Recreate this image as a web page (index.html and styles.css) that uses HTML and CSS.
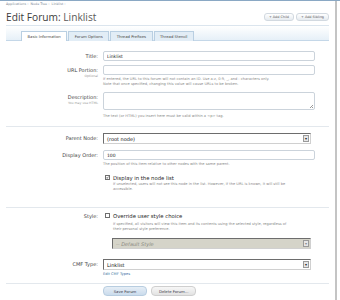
FILE: index.html
```html
<!DOCTYPE html>
<html lang="en">
<head>
  <meta charset="UTF-8" />
  <title>Edit Forum: Linklist</title>
  <link rel="stylesheet" href="styles.css">
</head>
<body>
  <div class="frame">
    <div class="page">
      <div class="crumbs">Applications &rsaquo; &nbsp;Node Tree &rsaquo; &nbsp;Linklist &rsaquo;</div>

      <div class="title-bar">
        <h1>Edit Forum: <span>Linklist</span></h1>
        <div class="top-buttons">
          <button class="mini-btn">+ Add Child</button>
          <button class="mini-btn">+ Add Sibling</button>
        </div>
      </div>

      <div class="tabs-band">
        <div class="tab active">Basic Information</div>
        <div class="tab">Forum Options</div>
        <div class="tab">Thread Prefixes</div>
        <div class="tab">Thread Stencil</div>
      </div>

      <form class="form">
        <div class="row row-title">
          <div class="label">Title:</div>
          <div class="control">
            <input class="field" type="text" value="Linklist" />
          </div>
        </div>

        <div class="row row-url">
          <div class="label">URL Portion:<small>Optional</small></div>
          <div class="control">
            <input class="field" type="text" value="" />
            <p class="hint">If entered, the URL to this forum will not contain an ID. Use a-z, 0-9, _, and - characters only.<br>Note that once specified, changing this value will cause URLs to be broken.</p>
          </div>
        </div>

        <div class="row row-desc">
          <div class="label">Description:<small>You may use HTML</small></div>
          <div class="control">
            <div class="field area"><span class="grip"></span></div>
            <p class="hint">The text (or HTML) you insert here must be valid within a &lt;p&gt; tag.</p>
          </div>
        </div>

        <div class="sep sep-1"></div>

        <div class="row row-parent">
          <div class="label label-select">Parent Node:</div>
          <div class="control">
            <div class="select"><span>(root node)</span><span class="arrow">&#9662;</span></div>
          </div>
        </div>

        <div class="row row-order">
          <div class="label">Display Order:</div>
          <div class="control">
            <input class="field" type="text" value="100" />
            <p class="hint">The position of this item relative to other nodes with the same parent.</p>
          </div>
        </div>

        <div class="row row-check">
          <div class="label"></div>
          <div class="control">
            <div class="check"><span class="box checked"><svg viewBox="0 0 10 10"><polyline points="2,5 4,8 8,2" /></svg></span>Display in the node list</div>
            <p class="hint hint-check">If unselected, users will not see this node in the list. However, if the URL is known, it will still be<br>accessible.</p>
          </div>
        </div>

        <div class="sep sep-2"></div>

        <div class="row row-style">
          <div class="label label-check">Style:</div>
          <div class="control">
            <div class="check"><span class="box"></span>Override user style choice</div>
            <p class="hint hint-check">If specified, all visitors will view this item and its contents using the selected style, regardless of<br>their personal style preference.</p>
            <div class="select disabled"><span>-- Default Style</span><span class="arrow">&#9662;</span></div>
          </div>
        </div>

        <div class="row row-cmf">
          <div class="label label-select">CMF Type:</div>
          <div class="control">
            <div class="select"><span>Linklist</span><span class="arrow">&#9662;</span></div>
            <a class="link" href="#">Edit CMF Types</a>
          </div>
        </div>

        <div class="sep sep-3"></div>

        <div class="row row-submit">
          <div class="label"></div>
          <div class="control buttons">
            <button class="btn primary" type="button">Save Forum</button>
            <button class="btn" type="button">Delete Forum...</button>
          </div>
        </div>
      </form>
    </div>
    <div class="edge"></div>
  </div>
</body>
</html>
```

FILE: styles.css
```css
* {
  box-sizing: border-box;
  margin: 0;
  padding: 0;
}

body {
  font-family: "DejaVu Sans", Verdana, sans-serif;
  color: #333;
  background: #fff;
}

.frame {
  display: flex;
  height: 300px;
  border-top: 1px solid #8aa8c4;
}

.page {
  flex: 1;
  padding: 0 6px;
}

.edge {
  width: 2px;
  background: #c4c4c4;
  margin-right: 3px;
}

.crumbs {
  height: 7px;
  font-size: 3.3px;
  line-height: 6px;
  color: #7d8a96;
}

.title-bar {
  display: flex;
  align-items: center;
  justify-content: space-between;
  height: 18px;
  border-bottom: 1px solid #dbe5ee;
}

h1 {
  font-family: "Open Sans", sans-serif;
  font-size: 10.2px;
  font-weight: normal;
  color: #3c3c3c;
}

h1 span {
  color: #5a5a5a;
}

.top-buttons {
  display: flex;
  gap: 2px;
}

.mini-btn {
  height: 8px;
  padding: 0 4px;
  font-family: inherit;
  font-size: 3.4px;
  line-height: 6px;
  color: #555;
  border: 1px solid #d2d9e0;
  border-radius: 3px;
  background: linear-gradient(#fff, #e6ebf0);
}

.tabs-band {
  display: flex;
  height: 15px;
  padding: 5px 0 0 15px;
  background: linear-gradient(#fff, #e6f0f8);
  border-bottom: 1px solid #c4d7e8;
}

.tab {
  height: 10px;
  margin-right: 1px;
  padding: 0 5.5px;
  font-size: 3.8px;
  line-height: 9px;
  color: #444;
  background: #e2edf6;
  border: 1px solid #b9cfe2;
  border-bottom: none;
}

.tab.active {
  background: #fff;
}

.form {
  padding-top: 10px;
}

.row {
  display: flex;
  padding-right: 14px;
}

.label {
  width: 92px;
  margin-right: 5px;
  font-size: 5px;
  line-height: 10px;
  text-align: right;
  color: #444;
}

.label small {
  display: block;
  font-size: 3.2px;
  line-height: 3px;
  color: #999;
}

.label-select {
  line-height: 11px;
}

.label-check {
  line-height: 6px;
}

.control {
  flex: 1;
}

.field {
  display: block;
  width: 100%;
  height: 10px;
  padding: 0 3px;
  font-family: inherit;
  font-size: 4.5px;
  color: #222;
  background: #fff;
  border: 1px solid #cbd3db;
  border-radius: 2px;
  outline: none;
}

.area {
  position: relative;
  height: 18px;
}

.grip {
  position: absolute;
  right: 1px;
  bottom: 1px;
  width: 3px;
  height: 3px;
  background: linear-gradient(135deg, transparent 45%, #999 45%, #999 55%, transparent 55%, transparent 75%, #999 75%);
}

.hint {
  margin-top: 1.5px;
  font-size: 3.6px;
  line-height: 5px;
  color: #8a8a8a;
}

.hint-check {
  margin-left: 10px;
  line-height: 5.5px;
}

.sep {
  height: 1px;
  background: #e3e8ed;
}

.row-title { margin-bottom: 4px; }
.row-url { margin-bottom: 5.5px; }
.row-desc .hint { margin-top: 3.5px; }
.sep-1 { margin: 7.5px 0 6px; }
.row-parent { margin-bottom: 6px; }
.row-check { margin-top: 8px; }
.row-check .hint { margin-top: 1px; }
.sep-2 { margin: 14px 0 5px; }
.row-style .hint { margin-top: 3px; }
.row-cmf { margin-top: 10px; }
.sep-3 { margin: 6px 0 2px; }

.select {
  display: flex;
  align-items: center;
  justify-content: space-between;
  width: 208px;
  height: 11px;
  padding: 0 1px 0 3px;
  font-size: 5px;
  color: #111;
  background: #fff;
  border: 1px solid;
  border-color: #6d6d6d #d0d0d0 #d0d0d0 #6d6d6d;
}

.select .arrow {
  width: 6px;
  height: 7px;
  font-size: 4px;
  line-height: 6px;
  text-align: center;
  color: #222;
  background: #e6e6e6;
  border: 1px solid #9a9a9a;
}

.select.disabled {
  width: 199px;
  margin: 5.5px 0 0 9px;
  font-style: italic;
  color: #8a8a80;
  background: #d5d4c9;
}

.select.disabled .arrow {
  font-style: normal;
  color: #888;
}

.check {
  display: flex;
  align-items: center;
  gap: 3px;
  height: 6px;
  padding-left: 2px;
  font-size: 5.3px;
  color: #222;
}

.box {
  width: 5px;
  height: 5px;
  background: #fff;
  border: 1px solid #6f6f6f;
}

.box svg {
  display: block;
  width: 3px;
  height: 3px;
  fill: none;
  stroke: #222;
  stroke-width: 2;
}

.link {
  display: block;
  margin-top: 2px;
  font-size: 3.6px;
  line-height: 5px;
  color: #3a6fa0;
  text-decoration: none;
}

.buttons {
  display: flex;
  gap: 4px;
}

.btn {
  height: 10px;
  padding: 0 7px;
  font-family: inherit;
  font-size: 3.8px;
  color: #334;
  background: linear-gradient(#f7f7f7, #e2e2e2);
  border: 1px solid #cfcfcf;
  border-radius: 4px;
}

.btn.primary {
  width: 44px;
  background: linear-gradient(#e6eef6, #cadbec);
  border-color: #b8cde0;
}
```
